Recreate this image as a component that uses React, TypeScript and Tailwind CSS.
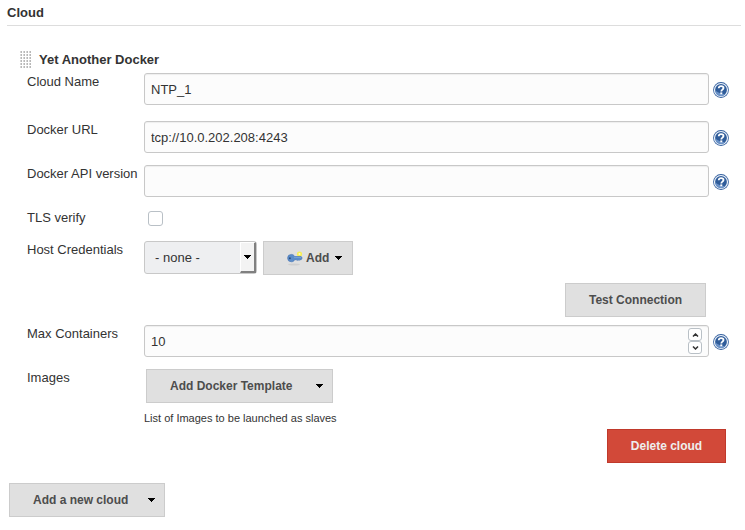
import { useState } from "react";
import type { ReactNode } from "react";

function HelpButton({ topic }: { topic: string }) {
  return (
    <button type="button" aria-label={`Help for ${topic}`} className="mt-[9px] block size-4 shrink-0">
      <svg viewBox="0 0 16 16" className="block size-4">
        <circle cx="8" cy="8" r="7.9" fill="#34609f" />
        <circle cx="8" cy="8" r="7.1" fill="#eef3fa" />
        <circle cx="8" cy="8" r="5.9" fill="#2f5c9a" />
        <path d="M2.2 8.5a5.8 5.8 0 0 0 10 3.8C9 12 5 11 2.2 8.5z" fill="#6a92c8" />
        <path
          d="M5.7 6.2C5.800 4.800 6.700 4.100 8.100 4.100c1.400 0 2.400.7 2.400 1.900 0 1.500-2.200 1.700-2.200 3.400"
          fill="none"
          stroke="#fff"
          strokeWidth="1.8"
        />
        <rect x="7.3" y="10.4" width="2" height="1.900" fill="#fff" />
      </svg>
    </button>
  );
}

function Caret() {
  return (
    <svg viewBox="0 0 7 4" className="h-1 w-[7px] shrink-0" shapeRendering="crispEdges">
      <path d="M0 0h7v1H6v1H5v1H4v1H3V3H2V2H1V1H0z" fill="#000" />
    </svg>
  );
}

function KeyIcon() {
  return (
    <svg viewBox="0 0 16 16" className="size-4 shrink-0">
      <ellipse cx="7" cy="14.500" rx="6" ry=".9" fill="#cfcfcf" />
      <circle cx="12.500" cy="4" r="2.600" fill="#f7ee55" />
      <circle cx="12.500" cy="4" r="1" fill="#fffcc4" />
      <path
        d="M4.300 4.400c1.700 0 2.800.9 3.400 2.100h6.500l1 1.500-1 1.700h-1.400l-.8.9-.9-.9-.9.9-.9-.9H7.700c-.6 1.300-1.700 2.100-3.400 2.100a3.700 3.700 0 0 1 0-7.400z"
        fill="#5b8cca"
        stroke="#4472b0"
        strokeWidth=".6"
      />
      <circle cx="2.900" cy="8.200" r="1" fill="#2b4d78" />
      <path d="M7 7.500h7" stroke="#7ea8da" strokeWidth=".7" />
    </svg>
  );
}

function Row({
  label,
  htmlFor,
  help,
  className,
  children,
}: {
  label: string;
  htmlFor?: string;
  help?: boolean;
  className: string;
  children: ReactNode;
}) {
  const Label = htmlFor ? "label" : "span";
  return (
    <div className={`flex items-start ${className}`}>
      <Label htmlFor={htmlFor} className="w-[117px] shrink-0 leading-[18px] whitespace-nowrap">
        {label}
      </Label>
      <div className="mr-1 min-w-0 flex-1">{children}</div>
      {help ? <HelpButton topic={label} /> : <span className="w-4 shrink-0" />}
    </div>
  );
}

const field =
  "block h-8 w-full rounded-[3px] border border-[#c8c8c8] bg-[#fcfcfc] px-1.5 shadow-[inset_0_1px_1px_#eeeeee] outline-none";
const button =
  "flex h-[34px] items-center border border-[#cccccc] bg-[#e0e0e0] text-xs font-bold text-[#4d4d4d] whitespace-nowrap";
const spin = "flex h-[13px] w-3.5 items-center justify-center rounded-[3px] border border-[#b9c0c6] bg-white";

export default function App() {
  const [name, setName] = useState("NTP_1");
  const [url, setUrl] = useState("tcp://10.0.202.208:4243");
  const [version, setVersion] = useState("");
  const [max, setMax] = useState(10);

  return (
    <main className="min-h-screen bg-white font-['Liberation_Sans',Arial,sans-serif] text-[13px] text-[#333333]">
      <h1 className="mr-1 ml-[7px] border-b border-[#dddddd] pt-1 pb-[3px] text-[13px] leading-[18px] font-bold">
        Cloud
      </h1>

      <section className="pr-4 pl-[27px]">
        <div className="-ml-[7px] flex items-center gap-2 pt-[25px]">
          <svg viewBox="0 0 11 18" className="h-[18px] w-[11px]" shapeRendering="crispEdges">
            <defs>
              <pattern id="grip" width="3" height="3" patternUnits="userSpaceOnUse">
                <rect width="2" height="2" fill="#d6d6d6" />
                <rect x="1" width="1" height="2" fill="#b8b8b8" />
              </pattern>
            </defs>
            <rect width="11" height="18" fill="url(#grip)" />
          </svg>
          <h2 className="text-[13px] leading-[18px] font-bold">Yet Another Docker</h2>
        </div>

        <Row label="Cloud Name" htmlFor="name" help className="mt-1">
          <input id="name" className={field} value={name} onChange={(e) => setName(e.target.value)} />
        </Row>
        <Row label="Docker URL" htmlFor="url" help className="mt-4">
          <input id="url" className={field} value={url} onChange={(e) => setUrl(e.target.value)} />
        </Row>
        <Row label="Docker API version" htmlFor="version" help className="mt-3">
          <input id="version" className={field} value={version} onChange={(e) => setVersion(e.target.value)} />
        </Row>
        <Row label="TLS verify" htmlFor="tls" className="mt-3">
          <input
            id="tls"
            type="checkbox"
            className="mt-0.5 ml-1 block size-[15px] appearance-none rounded-[3px] border border-[#b9c0c6] bg-white checked:bg-[#34609f]"
          />
        </Row>
        <Row label="Host Credentials" htmlFor="credentials" className="mt-3.5">
          <div className="flex items-start gap-1.5">
            <div className="relative">
              <select
                id="credentials"
                className="block h-[33px] w-[113px] appearance-none rounded-[3px] border border-[#c8c8c8] bg-[#eeeff1] pl-2.5 outline-none"
              >
                <option>- none -</option>
              </select>
              <span className="pointer-events-none absolute top-px right-px flex h-[31px] w-4 items-center justify-center border-t border-r-2 border-b-2 border-l border-t-white border-r-[#808080] border-b-[#808080] border-l-white bg-[#f3f3f3]">
                <Caret />
              </span>
            </div>
            <button type="button" className={`${button} w-[90px] pl-[23px]`}>
              <KeyIcon />
              <span className="mr-1.5 ml-[3px]">Add</span>
              <Caret />
            </button>
          </div>
        </Row>
        <div className="mt-2 mr-[7px] flex justify-end pr-4">
          <button type="button" className={`${button} w-[141px] justify-center`}>
            Test Connection
          </button>
        </div>
        <Row label="Max Containers" htmlFor="max" help className="mt-2">
          <div className="relative">
            <input
              id="max"
              type="number"
              className={`${field} [appearance:textfield] [&::-webkit-inner-spin-button]:appearance-none`}
              value={max}
              onChange={(e) => setMax(Number(e.target.value))}
            />
            <div className="absolute inset-y-0 right-[7px] flex flex-col justify-center">
              <button type="button" aria-label="Increase" className={spin} onClick={() => setMax(max + 1)}>
                <svg viewBox="0 0 7 4" className="h-1 w-[7px]">
                  <path d="M1 3.500l2.500-2.500L6 3.500" fill="none" stroke="#333333" strokeWidth="1.500" />
                </svg>
              </button>
              <button type="button" aria-label="Decrease" className={spin} onClick={() => setMax(max - 1)}>
                <svg viewBox="0 0 7 4" className="h-1 w-[7px]">
                  <path d="M1 .5L3.500 3 6 .5" fill="none" stroke="#333333" strokeWidth="1.500" />
                </svg>
              </button>
            </div>
          </div>
        </Row>
        <Row label="Images" className="mt-3">
          <button type="button" className={`${button} ml-0.5 w-[187px] justify-between pr-[9px] pl-[23px]`}>
            Add Docker Template
            <Caret />
          </button>
          <p className="mt-2 text-[11px] leading-[14px]">List of Images to be launched as slaves</p>
        </Row>
        <div className="mt-1 mr-[3px] flex justify-end">
          <button
            type="button"
            className="h-[34px] w-[119px] border border-[#c0392b] bg-[#d24939] text-xs font-bold text-[#eeeeee]"
          >
            Delete cloud
          </button>
        </div>
      </section>

      <button type="button" className={`${button} mt-5 ml-[9px] w-[156px] justify-between pr-[9px] pl-[23px]`}>
        Add a new cloud
        <Caret />
      </button>
    </main>
  );
}
